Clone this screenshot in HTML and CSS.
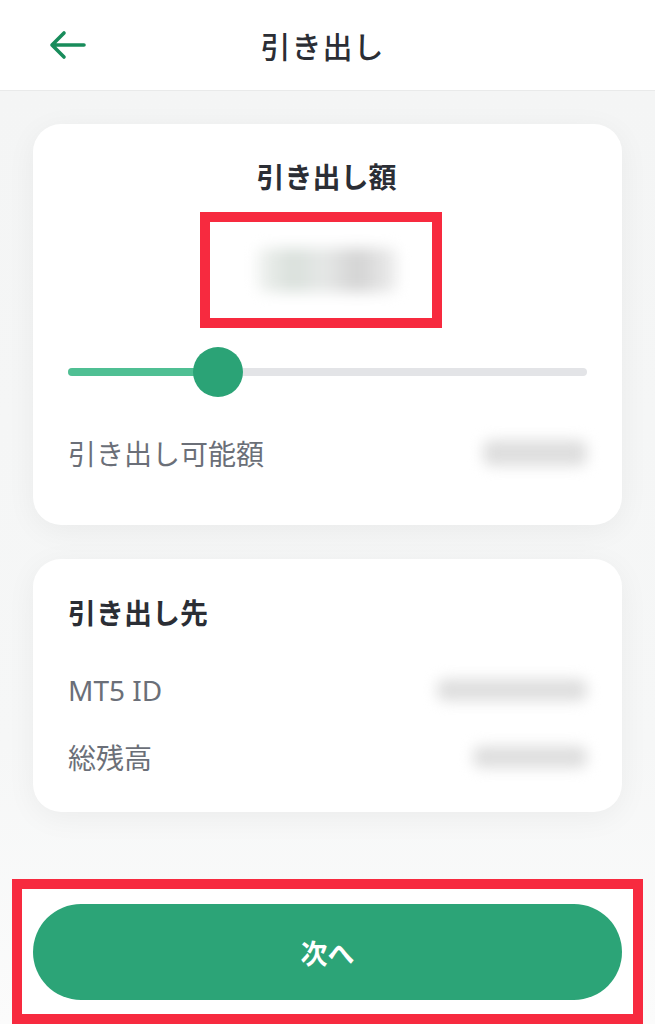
FILE: index.html
```html
<!DOCTYPE html>
<html lang="ja">
<head>
    <meta charset="UTF-8">
    <meta name="viewport" content="width=device-width, initial-scale=1.0">
    <title>引き出し</title>
    <link rel="stylesheet" href="styles.css">
</head>
<body>
    <header class="topbar">
        <div class="back">
            <svg width="40" height="32" viewBox="0 0 40 32">
                <path d="M4 16 H36 M16 4 L4 16 L16 28" fill="none" stroke="#188c5b" stroke-width="3.6" stroke-linecap="round" stroke-linejoin="round"/>
            </svg>
        </div>
        <h1>引き出し</h1>
        <div></div>
    </header>

    <main class="content">
        <section class="card amount-card">
            <h2 class="card-title center">引き出し額</h2>
            <div class="mark amount-box">
                <div class="blur amount-blur"></div>
            </div>
            <div class="slider">
                <div class="track"></div>
                <div class="fill" style="width: 150px;"></div>
                <div class="thumb" style="left: 125px;"></div>
            </div>
            <div class="row first-row">
                <span class="label">引き出し可能額</span>
                <div class="blur value-blur" style="width: 104px;"></div>
            </div>
        </section>

        <section class="card dest-card">
            <h2 class="card-title">引き出し先</h2>
            <div class="row id-row">
                <span class="label">MT5 ID</span>
                <div class="blur value-blur" style="width: 150px;"></div>
            </div>
            <div class="row">
                <span class="label">総残高</span>
                <div class="blur value-blur" style="width: 114px;"></div>
            </div>
        </section>

        <div class="mark button-box">
            <button class="next-btn">次へ</button>
        </div>
    </main>
</body>
</html>
```

FILE: styles.css
```css
* {
    box-sizing: border-box;
}
body {
    margin: 0;
    font-family: "Noto Sans CJK JP", "Noto Sans", sans-serif;
    color: #2b2e35;
    background: #fff;
    overflow: hidden;
}
.topbar {
    height: 91px;
    display: grid;
    grid-template-columns: 1fr auto 1fr;
    align-items: center;
    padding: 0 48px;
    background: #fff;
    border-bottom: 1px solid #e9eaea;
}
.back {
    display: flex;
    align-items: center;
}
.topbar h1 {
    margin: 0 10px 0 0;
    font-size: 30px;
    font-weight: 500;
    line-height: 40px;
    letter-spacing: 1px;
}
.content {
    padding: 33px 33px 0 33px;
    background: linear-gradient(#f4f5f5, #f6f7f7 70%, #fbfbfb);
}
.card {
    background: #fff;
    border-radius: 28px;
    box-shadow: 0 6px 30px rgba(0, 0, 0, 0.05);
    padding: 32px 27px 0 35px;
}
.amount-card {
    height: 401px;
    display: flex;
    flex-direction: column;
}
.dest-card {
    margin-top: 34px;
    height: 253px;
    padding-top: 33px;
}
.card-title {
    margin: 0;
    font-size: 28px;
    line-height: 40px;
    font-weight: 700;
}
.card-title.center {
    text-align: center;
    margin-left: -10px;
}
.mark {
    border: 10px solid #f72a3f;
    background: #fff;
}
.amount-box {
    width: 242px;
    height: 116px;
    margin: 16px 0 0 132px;
    display: flex;
    align-items: center;
    justify-content: center;
    padding-left: 12px;
}
.blur {
    background: #d8d9d9;
    filter: blur(7px);
    border-radius: 8px;
}
.amount-blur {
    width: 140px;
    height: 44px;
    background: linear-gradient(90deg, #f1f3f1, #d9e0db 25%, #e6e8e7 48%, #d3d3d3 72%, #eeeeee);
}
.slider {
    position: relative;
    height: 50px;
    margin: 19px 8px 0 0;
}
.track {
    position: absolute;
    left: 0;
    right: 0;
    top: 21px;
    height: 8px;
    border-radius: 4px;
    background: #e3e4e7;
}
.fill {
    position: absolute;
    left: 0;
    top: 21px;
    height: 8px;
    border-radius: 4px;
    background: #4fbf93;
}
.thumb {
    position: absolute;
    top: 0;
    width: 50px;
    height: 50px;
    border-radius: 50%;
    background: #2ba376;
}
.row {
    display: flex;
    justify-content: space-between;
    align-items: center;
    height: 36px;
}
.first-row {
    margin-top: 33px;
    height: 45px;
}
.first-row .value-blur {
    height: 26px;
}
.id-row {
    margin-top: 40px;
    margin-bottom: 31px;
}
.label {
    font-family: "Noto Sans", "Noto Sans CJK JP", sans-serif;
    font-size: 28px;
    color: #6b6f78;
}
.value-blur {
    height: 22px;
    background: #dedede;
    margin-right: 8px;
}
.button-box {
    margin: 67px -21px 0 -21px;
    padding: 15px 11px 14px 11px;
}
.next-btn {
    display: block;
    width: 100%;
    height: 96px;
    border: none;
    border-radius: 48px;
    background: #2ca477;
    color: #fff;
    font-family: "Noto Sans CJK JP", sans-serif;
    font-size: 27px;
    font-weight: 700;
}
```
